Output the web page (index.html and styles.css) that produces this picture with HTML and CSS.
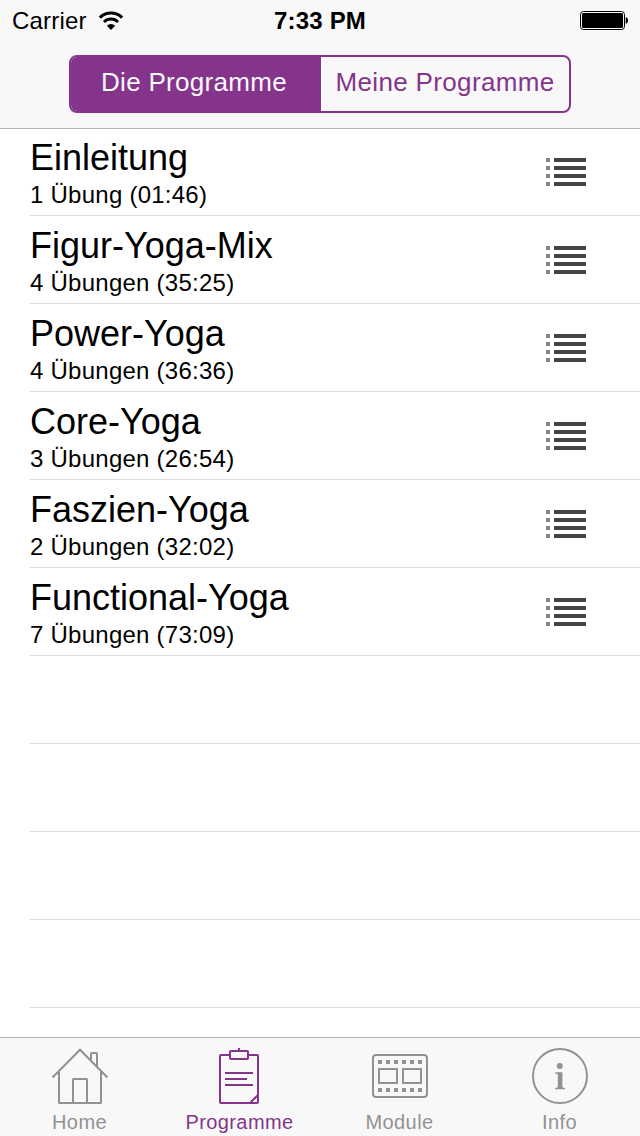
FILE: index.html
```
<!DOCTYPE html>
<html lang="de">
<head>
    <meta charset="UTF-8">
    <meta name="viewport" content="width=device-width, initial-scale=1.0">
    <title>Die Programme</title>
    <link rel="stylesheet" href="styles.css">
</head>
<body>
    <header class="header">
        <div class="status-bar">
            <div class="status-left">
                <span class="carrier">Carrier</span>
                <svg class="wifi" width="26" height="20" viewBox="0 0 26 20">
                    <path d="M1.9 6.6 A15.7 15.7 0 0 1 24.1 6.6" fill="none" stroke="#000" stroke-width="3.2"/>
                    <path d="M6 11 A9.9 9.9 0 0 1 20 11" fill="none" stroke="#000" stroke-width="3"/>
                    <path d="M13 19 L8.9 14.8 A5.8 5.8 0 0 1 17.1 14.8 Z"/>
                </svg>
            </div>
            <div class="clock">7:33 PM</div>
            <div class="status-right">
                <svg width="48" height="20" viewBox="0 0 48 20">
                    <rect x=".5" y=".5" width="44" height="18" rx="3" fill="none" stroke="#000"/>
                    <rect x="2" y="2" width="41" height="15" rx="1.5"/>
                    <path d="M46 6.5 A3 3.2 0 0 1 46 12.5 Z" stroke="#000" stroke-width=".6"/>
                </svg>
            </div>
        </div>
        <div class="segments">
            <button class="segment active"><span>Die Programme</span></button>
            <button class="segment"><span>Meine Programme</span></button>
        </div>
    </header>

    <!-- Icon used by every programme row -->
    <svg class="defs" width="0" height="0">
        <symbol id="list-icon" viewBox="0 0 40 28">
            <path fill="#858585" d="M0 0h4v4H0zM0 8h4v4H0zM0 16h4v4H0zM0 24h4v4H0z"/>
            <path fill="#444" d="M8 0h32v4H8zM8 8h32v4H8zM8 16h32v4H8zM8 24h32v4H8z"/>
        </symbol>
    </svg>

    <main class="list">
        <div class="row">
            <div class="row-text"><h2>Einleitung</h2><p>1 Übung (01:46)</p></div>
            <svg class="list-icon"><use href="#list-icon"/></svg>
        </div>
        <div class="row">
            <div class="row-text"><h2>Figur-Yoga-Mix</h2><p>4 Übungen (35:25)</p></div>
            <svg class="list-icon"><use href="#list-icon"/></svg>
        </div>
        <div class="row">
            <div class="row-text"><h2>Power-Yoga</h2><p>4 Übungen (36:36)</p></div>
            <svg class="list-icon"><use href="#list-icon"/></svg>
        </div>
        <div class="row">
            <div class="row-text"><h2>Core-Yoga</h2><p>3 Übungen (26:54)</p></div>
            <svg class="list-icon"><use href="#list-icon"/></svg>
        </div>
        <div class="row">
            <div class="row-text"><h2>Faszien-Yoga</h2><p>2 Übungen (32:02)</p></div>
            <svg class="list-icon"><use href="#list-icon"/></svg>
        </div>
        <div class="row">
            <div class="row-text"><h2>Functional-Yoga</h2><p>7 Übungen (73:09)</p></div>
            <svg class="list-icon"><use href="#list-icon"/></svg>
        </div>
        <div class="row"></div>
        <div class="row"></div>
        <div class="row"></div>
        <div class="row"></div>
    </main>

    <nav class="tab-bar">
        <a class="tab">
            <svg class="tab-icon" viewBox="0 0 60 60">
                <path d="M2.5 29.500 L30 1.700 L57.500 29.500M9 24v30.500q0 .5 .5 .5h41q.5 0 .5-.5V24M23 55V31.500q0-.5 .5-.5h13q.5 0 .5 .5V55M41 12V6q0-1 1-1h4q1 0 1 1v12.500"/>
            </svg>
            <span>Home</span>
        </a>
        <a class="tab selected">
            <svg class="tab-icon" viewBox="0 0 60 60">
                <path d="M20 7h-9q-1 0-1 1v46q0 1 1 1h36q1 0 1-1V8q0-1-1-1h-9M21 3h16q1 0 1 1v6q0 1-1 1H21q-1 0-1-1V4q0-1 1-1zM29 0v3M15 25h28M15 31h22M15 37h28M40.500 54.500l7.500-7.500"/>
            </svg>
            <span>Programme</span>
        </a>
        <a class="tab">
            <svg class="tab-icon" viewBox="0 0 60 60">
                <rect x="3" y="7" width="54" height="42" rx="3"/>
                <path d="M9 21h18v14H9zM33 21h18v14H33z"/>
                <path stroke-width="4" stroke-dasharray="4 4" d="M8 14h44M8 42h44"/>
            </svg>
            <span>Module</span>
        </a>
        <a class="tab">
            <svg class="tab-icon" viewBox="0 0 60 60">
                <circle cx="30" cy="28" r="27"/>
                <circle class="solid" cx="29.700" cy="18" r="3"/>
                <path class="solid" d="M25.200 24.200h7.200v14.300q0 1 1 1.200l1.600.3v1.300H25.200V40l1.600-.3q1-.2 1-1.200V27q0-1-1-1.200l-1.600-.3z"/>
            </svg>
            <span>Info</span>
        </a>
    </nav>
</body>
</html>
```
FILE: styles.css
```
* {
    box-sizing: border-box;
}
body {
    margin: 0;
    height: 1136px;
    display: flex;
    flex-direction: column;
    overflow: hidden;
    background: #fff;
    color: #000;
    font-family: "Liberation Sans", Arial, sans-serif;
}
.header {
    height: 129px;
    flex: none;
    background: #f8f8f8;
    border-bottom: 1px solid #b2b2b2;
}
.status-bar {
    height: 42px;
    padding: 0 12px;
    display: grid;
    grid-template-columns: 1fr auto 1fr;
    align-items: center;
    font-size: 24px;
    line-height: 42px;
}
.status-left {
    display: flex;
    align-items: center;
    gap: 11px;
}
.carrier {
    letter-spacing: 0.2px;
}
.clock {
    font-weight: bold;
    letter-spacing: 0.2px;
}
.status-right {
    display: flex;
    justify-content: flex-end;
}
.segments {
    width: 502px;
    height: 58px;
    margin: 13px 0 0 69px;
    display: flex;
    border: 2px solid #84358b;
    border-radius: 8px;
    background: #f8f8f8;
    overflow: hidden;
}
.segment {
    width: 248px;
    padding: 0 0 4px;
    border: none;
    background: none;
    color: #84358b;
    font-family: inherit;
    font-size: 26px;
    letter-spacing: 0.35px;
}
.segment.active {
    width: 250px;
    padding-right: 4px;
    background: #84358b;
    color: #f8f8f8;
    letter-spacing: 0.3px;
}
.defs {
    position: absolute;
}
.list {
    flex: 1;
    min-height: 0;
    overflow: hidden;
    padding-left: 30px;
}
.row {
    height: 88px;
    display: flex;
    justify-content: space-between;
    padding-right: 54px;
    border-bottom: 1px solid #e0d7e2;
}
.row:first-child {
    height: 87px;
}
.row:first-child .row-text {
    padding-top: 8px;
}
.row:first-child .list-icon {
    margin-top: 29px;
}
.row-text {
    padding-top: 9px;
}
.row h2 {
    margin: 0;
    font-size: 36px;
    font-weight: normal;
    line-height: 42px;
}
.row p {
    margin: 0;
    font-size: 24px;
    line-height: 32px;
    letter-spacing: 0.25px;
}
.list-icon {
    width: 40px;
    height: 28px;
    margin-top: 30px;
}
.tab-bar {
    height: 99px;
    flex: none;
    display: grid;
    grid-template-columns: repeat(4, 1fr);
    background: #f8f8f8;
    border-top: 1px solid #b2b2b2;
}
.tab {
    display: flex;
    flex-direction: column;
    align-items: center;
    padding-top: 10px;
    color: #929292;
    font-size: 20px;
    line-height: 24px;
    letter-spacing: 0.4px;
}
.tab span {
    padding-right: 1px;
}
.tab.selected {
    color: #84358b;
}
.tab-icon {
    width: 60px;
    height: 60px;
    margin-bottom: 2px;
    fill: none;
    stroke: currentColor;
    stroke-width: 2;
}
.tab-icon .solid {
    fill: currentColor;
    stroke: none;
}
```
